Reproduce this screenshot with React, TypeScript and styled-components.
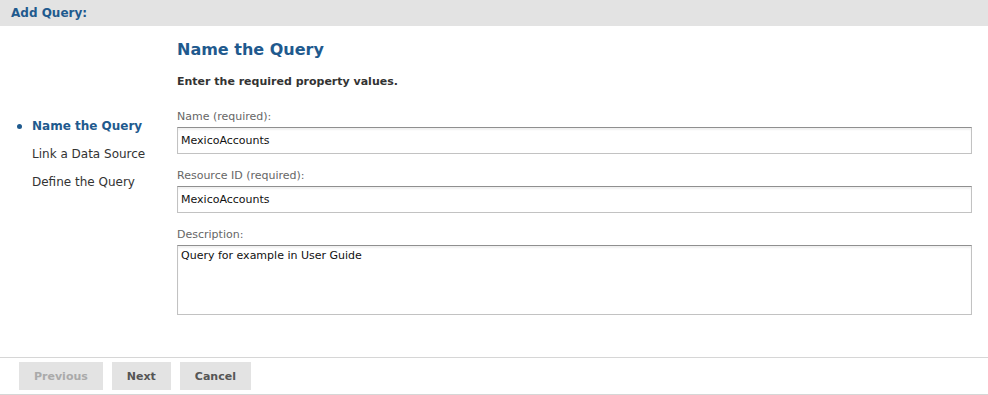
import React from "react";
import styled, { createGlobalStyle } from "styled-components";

const GlobalStyle = createGlobalStyle`
  html, body {
    margin: 0;
    padding: 0;
    background: #fff;
    font-family: "DejaVu Sans", Verdana, sans-serif;
  }
`;

const steps = ["Name the Query", "Link a Data Source", "Define the Query"];

const fields = [
  { label: "Name (required):", value: "MexicoAccounts" },
  { label: "Resource ID (required):", value: "MexicoAccounts" },
];

const App = () => {
  return (
    <Page>
      <GlobalStyle />
      <Header>Add Query:</Header>
      <Body>
        <Nav>
          {steps.map((s, i) => (
            <Step key={s} active={i === 0}>
              {s}
            </Step>
          ))}
        </Nav>
        <Main>
          <Title>Name the Query</Title>
          <Instructions>Enter the required property values.</Instructions>
          {fields.map((f) => (
            <Field key={f.label}>
              <Label>{f.label}</Label>
              <Input defaultValue={f.value} />
            </Field>
          ))}
          <Field>
            <Label>Description:</Label>
            <TextArea defaultValue="Query for example in User Guide" />
          </Field>
        </Main>
      </Body>
      <Footer>
        <Button disabled>Previous</Button>
        <Button>Next</Button>
        <Button>Cancel</Button>
      </Footer>
    </Page>
  );
};

const Page = styled.div`
  width: 988px;
  height: 395px;
  display: flex;
  flex-direction: column;
`;

const Header = styled.div`
  height: 26px;
  background: #e3e3e3;
  color: #1f5a8e;
  font-weight: bold;
  font-size: 12px;
  line-height: 26px;
  padding-left: 11px;
`;

const Body = styled.div`
  display: flex;
  flex: 1;
`;

const Nav = styled.ul`
  width: 177px;
  margin: 0;
  padding: 86px 0 0 32px;
  box-sizing: border-box;
  list-style: none;
`;

const Step = styled.li<{ active?: boolean }>`
  position: relative;
  height: 28px;
  line-height: 28px;
  font-size: 12px;
  white-space: nowrap;
  color: ${(p) => (p.active ? "#1f5a8e" : "#333")};
  font-weight: ${(p) => (p.active ? "bold" : "normal")};

  &::before {
    content: "";
    display: ${(p) => (p.active ? "block" : "none")};
    position: absolute;
    left: -15px;
    top: 12px;
    width: 5px;
    height: 5px;
    border-radius: 50%;
    background: #1f5a8e;
  }
`;

const Main = styled.div`
  flex: 1;
  padding: 13px 16px 0 0;
`;

const Title = styled.h2`
  margin: 0;
  font-size: 16px;
  line-height: 22px;
  color: #1f5a8e;
`;

const Instructions = styled.p`
  margin: 14px 0 21px;
  font-size: 11px;
  line-height: 14px;
  font-weight: bold;
  color: #333;
`;

const Field = styled.div`
  margin-bottom: 15px;
`;

const Label = styled.div`
  font-size: 11px;
  line-height: 14px;
  color: #666;
  margin-bottom: 3px;
`;

const inputBase = `
  display: block;
  width: 100%;
  box-sizing: border-box;
  border: 1px solid #c2c2c2;
  border-top-color: #8f8f8f;
  box-shadow: inset 0 2px 2px rgba(0, 0, 0, 0.06);
  font-family: "DejaVu Sans", Verdana, sans-serif;
  font-size: 11px;
  color: #111;
  padding: 0 3px;
  outline: none;
`;

const Input = styled.input`
  ${inputBase}
  height: 27px;
`;

const TextArea = styled.textarea`
  ${inputBase}
  height: 70px;
  padding-top: 3px;
  resize: none;
`;

const Footer = styled.div`
  display: flex;
  gap: 9px;
  padding: 4px 19px;
  border-top: 1px solid #d6d6d6;
  border-bottom: 1px solid #d6d6d6;
`;

const Button = styled.button`
  height: 28px;
  padding: 0 15px;
  border: none;
  background: #e3e3e3;
  font-family: "DejaVu Sans", Verdana, sans-serif;
  font-size: 11px;
  font-weight: bold;
  color: #555;

  &:disabled {
    color: #aaa;
  }
`;

export default App;
